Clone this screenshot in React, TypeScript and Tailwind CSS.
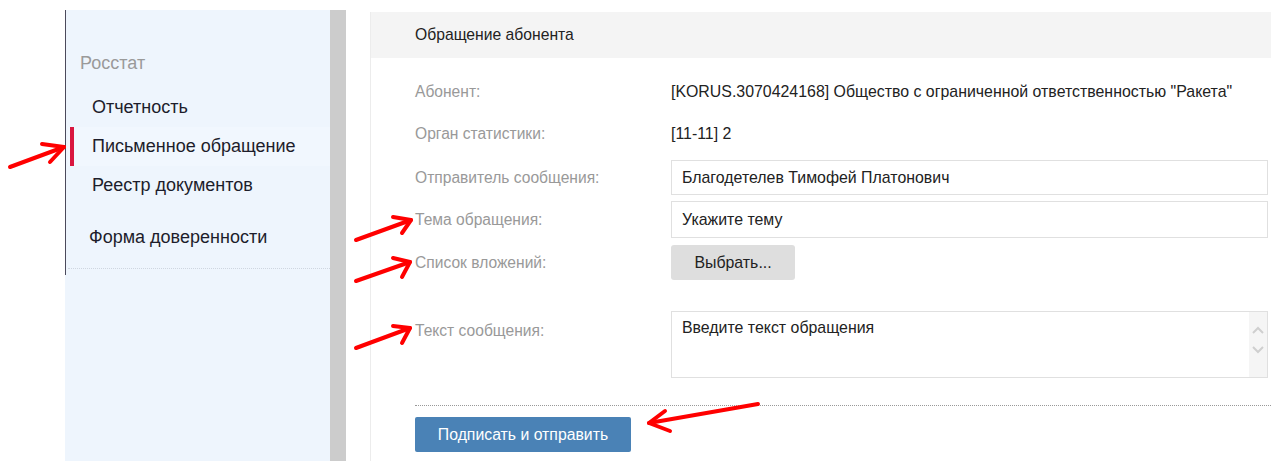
import { ReactNode } from "react";

const font = { fontFamily: '"Liberation Sans", Arial, sans-serif' };

type NavItem = { label: string; active?: boolean };

const navItems: NavItem[] = [
  { label: "Отчетность" },
  { label: "Письменное обращение", active: true },
  { label: "Реестр документов" },
];

function Row({ label, children, className = "", labelClass = "" }: { label: string; children: ReactNode; className?: string; labelClass?: string }) {
  return (
    <div className={`flex ${className}`}>
      <div className={`w-[256px] shrink-0 text-[15.6px] text-[#999] ${labelClass}`}>{label}</div>
      <div className="flex-1 min-w-0 text-[15.9px]">{children}</div>
    </div>
  );
}

function Sidebar() {
  return (
    <aside className="w-[265px] shrink-0 bg-[#eef5fd] h-full">
      <div className="border-l border-[#4b4a5c] pb-[6px]">
        <div className="border-b border-dotted border-[#cfd6e0] pb-[11px] ml-[2px]">
          <div className="pt-[43px] pl-[12px] text-[18px] leading-[20px] text-[#9a9a9a]">Росстат</div>
          <ul className="mt-[15px]">
            {navItems.map((item) => (
              <li
                key={item.label}
                className={`relative h-[39px] flex items-center pl-[24px] text-[18px] text-[#1d1d2b] ${item.active ? "bg-[#f1f7fe]" : ""}`}
              >
                {item.active && <span className="absolute left-[2px] top-0 bottom-0 w-[4px] bg-[#d9163f]" />}
                {item.label}
              </li>
            ))}
          </ul>
          <div className="mt-[13px] h-[39px] flex items-center pl-[21px] text-[18px] text-[#1d1d2b]">
            Форма доверенности
          </div>
        </div>
      </div>
    </aside>
  );
}

function MessageForm() {
  return (
    <section className="flex-1 min-w-0 pt-[2px]">
      <div className="h-full border-l border-[#ececec]">
        <div className="h-[46px] bg-[#f4f4f4] flex items-center pl-[44px] text-[15.7px] text-[#222]">
          Обращение абонента
        </div>
        <div className="pl-[44px] pr-[3px] pt-[13px]">
          <Row label="Абонент:" className="h-[42px] items-center">
            <span className="text-[#222] whitespace-nowrap">
              [KORUS.3070424168] Общество с ограниченной ответственностью "Ракета"
            </span>
          </Row>
          <Row label="Орган статистики:" className="h-[42px] items-center">
            <span className="text-[#222]">[11-11] 2</span>
          </Row>
          <Row label="Отправитель сообщения:" className="mt-[5px] h-[35px] items-center">
            <div className="h-[35px] border border-[#e0e0e0] flex items-center px-[10px] text-[#222]">
              Благодетелев Тимофей Платонович
            </div>
          </Row>
          <Row label="Тема обращения:" className="mt-[6px] h-[37px] items-center">
            <div className="h-[37px] border border-[#e0e0e0] flex items-center px-[10px] text-[#222]">
              Укажите тему
            </div>
          </Row>
          <Row label="Список вложений:" className="mt-[7px] h-[35px] items-center">
            <button className="h-[35px] w-[124px] bg-[#dedede] rounded-[3px] text-[#222]">Выбрать...</button>
          </Row>
          <Row label="Текст сообщения:" className="mt-[31px] items-start" labelClass="pt-[8px]">
            <div className="h-[67px] border border-[#e0e0e0] flex">
              <div className="flex-1 px-[10px] pt-[4px] text-[#222]">Введите текст обращения</div>
              <div className="w-[18px] bg-[#f5f5f5] flex flex-col items-center pt-[14px] gap-[12px]">
                <svg width="12" height="8" viewBox="0 0 12 8" fill="none" stroke="#cfcfcf" strokeWidth="2">
                  <path d="M1 7l5-5 5 5" />
                </svg>
                <svg width="12" height="8" viewBox="0 0 12 8" fill="none" stroke="#cfcfcf" strokeWidth="2">
                  <path d="M1 1l5 5 5-5" />
                </svg>
              </div>
            </div>
          </Row>
          <div className="mt-[27px] -mr-[3px] border-t border-dotted border-[#999]" />
          <button className="mt-[11px] h-[35px] w-[216px] bg-[#4a82b6] rounded-[2px] text-white text-[15.8px]">
            Подписать и отправить
          </button>
        </div>
      </div>
    </section>
  );
}

// red pointer marks drawn over the form
function Pointers() {
  const arrows = [
    { tail: [10, 167], tip: [64, 147], a: [42, 144], b: [50, 162] },
    { tail: [356, 240], tip: [411, 220], a: [393, 217], b: [402, 233] },
    { tail: [356, 281], tip: [410, 262], a: [393, 258], b: [402, 277] },
    { tail: [356, 348], tip: [410, 328], a: [393, 326], b: [402, 343] },
    { tail: [758, 404], tip: [649, 423], a: [665, 411], b: [670, 431] },
  ];
  return (
    <svg className="absolute inset-0 pointer-events-none" width="1271" height="461">
      {arrows.map((ar, i) => (
        <g key={i} stroke="#ff0000" strokeWidth="4" strokeLinecap="round" strokeLinejoin="round" fill="none">
          <path d={`M${ar.tail[0]} ${ar.tail[1]}L${ar.tip[0]} ${ar.tip[1]}`} />
          <path d={`M${ar.a[0]} ${ar.a[1]}L${ar.tip[0]} ${ar.tip[1]}L${ar.b[0]} ${ar.b[1]}`} />
        </g>
      ))}
    </svg>
  );
}

export default function App() {
  return (
    <div className="relative w-full h-[461px] bg-white overflow-hidden" style={font}>
      <div className="flex h-full pt-[10px] pl-[65px]">
        <Sidebar />
        <div className="w-[16px] shrink-0 bg-[#cccccc]" />
        <div className="w-[24px] shrink-0" />
        <MessageForm />
      </div>
      <Pointers />
    </div>
  );
}
